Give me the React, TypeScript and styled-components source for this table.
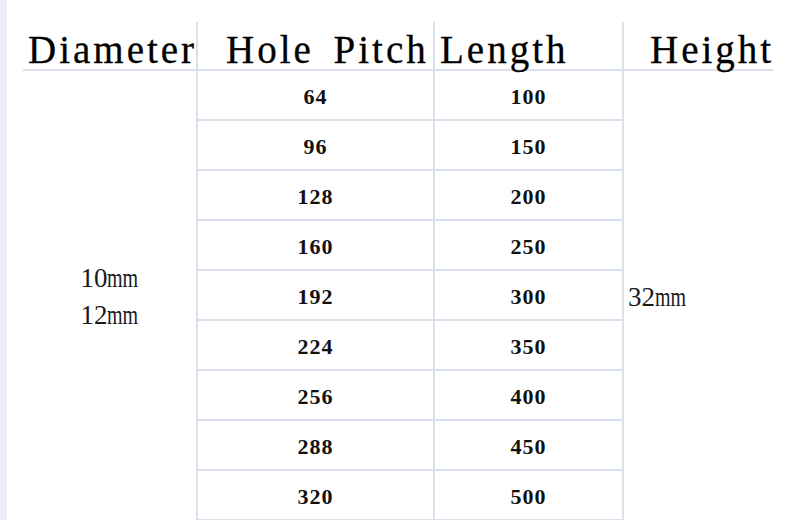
import React from "react";
import styled, { createGlobalStyle } from "styled-components";

const Global = createGlobalStyle`
  html, body { margin: 0; padding: 0; background: #ffffff; }
  #root { width: 810px; height: 520px; overflow: hidden; }
`;

const LINE = "#dbe1ec";

const Page = styled.div`
  display: flex;
  width: 810px;
  height: 520px;
  overflow: hidden;
  background: #ffffff;
`;

const Strip = styled.div`
  flex: 0 0 7px;
  background: #eceff5;
`;

const Content = styled.div`
  flex: 1;
  padding: 22px 0 0 16px;
`;

const Grid = styled.div`
  display: grid;
  grid-template-columns: 175px 237px 189px 149px;
  grid-template-rows: 49px repeat(9, 50px);
`;

const HeadCell = styled.div<{ $indent: number; $divider?: boolean }>`
  box-sizing: border-box;
  padding: 9px 0 0 ${(p) => p.$indent}px;
  border-bottom: 2px solid ${LINE};
  border-right: ${(p) => (p.$divider ? `2px solid ${LINE}` : "none")};
  font-family: "Liberation Serif", "DejaVu Serif", serif;
  font-size: 39px;
  line-height: 38px;
  letter-spacing: 3px;
  word-spacing: 7px;
  white-space: nowrap;
  color: #000000;
  -webkit-text-stroke: 0.3px #000000;
`;

const SpanCell = styled.div<{ $align: "center" | "left"; $divider?: boolean }>`
  grid-row: span 9;
  box-sizing: border-box;
  display: flex;
  flex-direction: column;
  justify-content: center;
  align-items: ${(p) => (p.$align === "center" ? "center" : "flex-start")};
  padding-left: ${(p) => (p.$align === "center" ? 0 : 4)}px;
  padding-top: 2px;
  border-right: ${(p) => (p.$divider ? `2px solid ${LINE}` : "none")};
  font-family: "Liberation Serif", "DejaVu Serif", serif;
  font-size: 27px;
  line-height: 37px;
  color: #1a1a1a;
`;

const Unit = styled.span`
  display: inline-block;
  transform: scaleX(0.74);
  transform-origin: left center;
  margin-right: -11px;
`;

const NumCell = styled.div`
  box-sizing: border-box;
  display: flex;
  align-items: center;
  justify-content: center;
  padding-top: 3px;
  border-right: 2px solid ${LINE};
  border-bottom: 2px solid ${LINE};
  font-family: "Liberation Serif", "DejaVu Serif", serif;
  font-weight: 700;
  font-size: 22px;
  letter-spacing: 1px;
  color: #111111;
`;

const rows: [number, number][] = [
  [64, 100],
  [96, 150],
  [128, 200],
  [160, 250],
  [192, 300],
  [224, 350],
  [256, 400],
  [288, 450],
  [320, 500],
];

function Size({ value }: { value: string }) {
  return (
    <div>
      {value}
      <Unit>mm</Unit>
    </div>
  );
}

export default function App() {
  return (
    <>
      <Global />
      <Page>
        <Strip />
        <Content>
          <Grid>
            <HeadCell $indent={5} $divider>Diameter</HeadCell>
            <HeadCell $indent={28} $divider>Hole Pitch</HeadCell>
            <HeadCell $indent={5} $divider>Length</HeadCell>
            <HeadCell $indent={26}>Height</HeadCell>

            <SpanCell $align="center" $divider style={{ gridColumn: 1, gridRow: "2 / span 9" }}>
              <Size value="10" />
              <Size value="12" />
            </SpanCell>
            {rows.map(([pitch, length], i) => (
              <React.Fragment key={pitch}>
                <NumCell style={{ gridColumn: 2, gridRow: i + 2 }}>{pitch}</NumCell>
                <NumCell style={{ gridColumn: 3, gridRow: i + 2 }}>{length}</NumCell>
              </React.Fragment>
            ))}
            <SpanCell $align="left" style={{ gridColumn: 4, gridRow: "2 / span 9" }}>
              <Size value="32" />
            </SpanCell>
          </Grid>
        </Content>
      </Page>
    </>
  );
}
